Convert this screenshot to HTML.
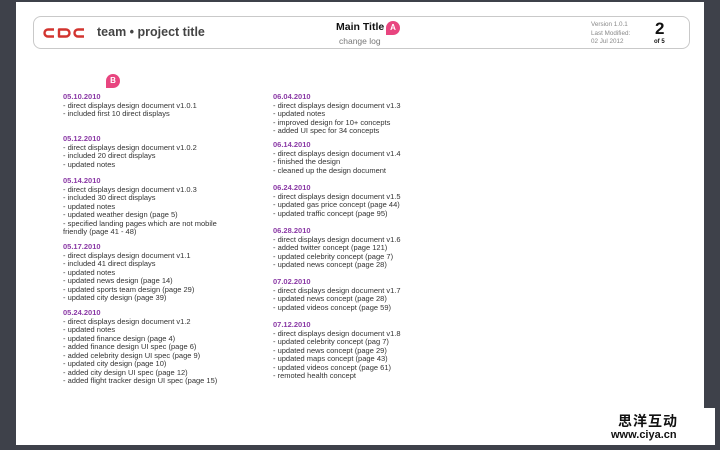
<!DOCTYPE html>
<html><head><meta charset="utf-8"><style>
html,body{margin:0;padding:0}
body{width:720px;height:450px;background:#3e414a;position:relative;overflow:hidden;font-family:"Liberation Sans",sans-serif}
.page{position:absolute;left:16px;top:2px;width:688px;height:443px;background:#fff}
.hdr{position:absolute;left:33px;top:16px;width:655px;height:31px;border:1px solid #c9c9c9;border-radius:8px;background:#fff}
.abs{position:absolute;white-space:nowrap}
.g{position:absolute;font-size:7.5px;line-height:8.5px;color:#333;white-space:nowrap}
.g b{color:#8b3aa6;font-weight:bold}
.pin{position:absolute;width:14px;height:14px;border-radius:7px 7px 7px 0;background:#e8457f;color:#fff;font-size:8px;font-weight:bold;text-align:center;line-height:14px}
</style></head><body>
<div class="page"></div>
<div class="hdr"></div>
<svg class="abs" style="left:43px;top:28px" width="44" height="10" viewBox="0 0 44 10">
<path d="M11 1.5H5a3.5 3.5 0 0 0 0 7h6" fill="none" stroke="#d2342f" stroke-width="2.4"/>
<path d="M16 1.5h7a3.5 3.5 0 0 1 0 7h-7z" fill="none" stroke="#d2342f" stroke-width="2.4" stroke-linejoin="round"/>
<path d="M41 1.5h-6a3.5 3.5 0 0 0 0 7h6" fill="none" stroke="#d2342f" stroke-width="2.4"/>
</svg>
<div class="abs" style="left:97px;top:25px;font-size:12.5px;font-weight:bold;color:#444">team • project title</div>
<div class="abs" style="left:336px;top:21px;font-size:10.5px;font-weight:bold;color:#111">Main Title</div>
<div class="abs" style="left:339px;top:36px;font-size:8.5px;color:#777">change log</div>
<div class="pin" style="left:386px;top:21px">A</div>
<div class="abs" style="left:591px;top:21px;font-size:6.3px;line-height:8.5px;color:#888">Version 1.0.1<br>Last Modified:<br>02 Jul 2012</div>
<div class="abs" style="left:655px;top:19px;font-size:17px;font-weight:bold;color:#111">2</div>
<div class="abs" style="left:654px;top:39px;font-size:6px;font-weight:bold;color:#111">of 5</div>
<div class="pin" style="left:106px;top:74px">B</div>

<div class="g" style="left:63px;top:93px"><b>05.10.2010</b><br>- direct displays design document v1.0.1<br>- included first 10 direct displays</div>
<div class="g" style="left:63px;top:135px"><b>05.12.2010</b><br>- direct displays design document v1.0.2<br>- included 20 direct displays<br>- updated notes</div>
<div class="g" style="left:63px;top:177px"><b>05.14.2010</b><br>- direct displays design document v1.0.3<br>- included 30 direct displays<br>- updated notes<br>- updated weather design (page 5)<br>- specified landing pages which are not mobile<br>friendly (page 41 - 48)</div>
<div class="g" style="left:63px;top:243px"><b>05.17.2010</b><br>- direct displays design document v1.1<br>- included 41 direct displays<br>- updated notes<br>- updated news design (page 14)<br>- updated sports team design (page 29)<br>- updated city design (page 39)</div>
<div class="g" style="left:63px;top:309px"><b>05.24.2010</b><br>- direct displays design document v1.2<br>- updated notes<br>- updated finance design (page 4)<br>- added finance design UI spec (page 6)<br>- added celebrity design UI spec (page 9)<br>- updated city design (page 10)<br>- added city design UI spec (page 12)<br>- added flight tracker design UI spec (page 15)</div>

<div class="g" style="left:273px;top:93px"><b>06.04.2010</b><br>- direct displays design document v1.3<br>- updated notes<br>- improved design for 10+ concepts<br>- added UI spec for 34 concepts</div>
<div class="g" style="left:273px;top:141px"><b>06.14.2010</b><br>- direct displays design document v1.4<br>- finished the design<br>- cleaned up the design document</div>
<div class="g" style="left:273px;top:184px"><b>06.24.2010</b><br>- direct displays design document v1.5<br>- updated gas price concept (page 44)<br>- updated traffic concept (page 95)</div>
<div class="g" style="left:273px;top:227px"><b>06.28.2010</b><br>- direct displays design document v1.6<br>- added twitter concept (page 121)<br>- updated celebrity concept (page 7)<br>- updated news concept (page 28)</div>
<div class="g" style="left:273px;top:278px"><b>07.02.2010</b><br>- direct displays design document v1.7<br>- updated news concept (page 28)<br>- updated videos concept (page 59)</div>
<div class="g" style="left:273px;top:321px"><b>07.12.2010</b><br>- direct displays design document v1.8<br>- updated celebrity concept (pag 7)<br>- updated news concept (page 29)<br>- updated maps concept (page 43)<br>- updated videos concept (page 61)<br>- remoted health concept</div>

<div class="abs" style="left:600px;top:408px;width:115px;height:37px;background:#fff"></div>
<div class="abs" style="left:618px;top:411px;font-family:'Noto Sans CJK SC',sans-serif;font-size:14px;font-weight:bold;color:#111;letter-spacing:1px">思洋互动</div>
<div class="abs" style="left:611px;top:429px;font-size:11px;font-weight:bold;color:#111">www.ciya.cn</div>
</body></html>
